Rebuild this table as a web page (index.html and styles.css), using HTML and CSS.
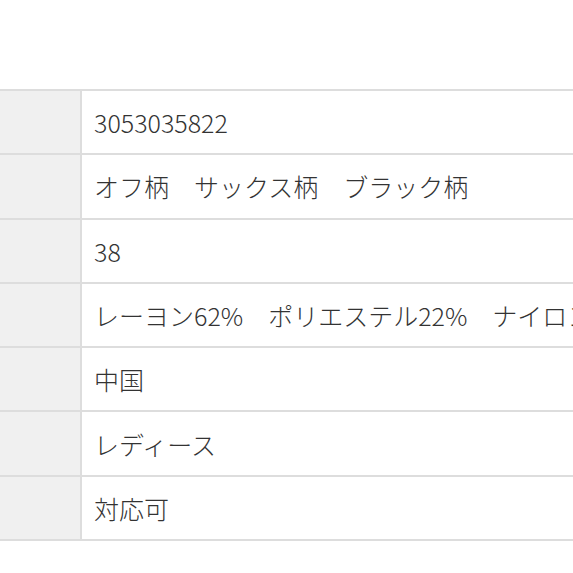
FILE: index.html
```html
<!DOCTYPE html>
<html lang="ja">
<head>
<meta charset="utf-8">
<link rel="stylesheet" href="styles.css">
</head>
<body>
<div class="spec">
  <div class="row"><div class="label"></div><div class="value">3053035822</div></div>
  <div class="row"><div class="label"></div><div class="value">オフ柄　サックス柄　ブラック柄</div></div>
  <div class="row"><div class="label"></div><div class="value">38</div></div>
  <div class="row"><div class="label"></div><div class="value">レーヨン62%　ポリエステル22%　ナイロン16%</div></div>
  <div class="row"><div class="label"></div><div class="value">中国</div></div>
  <div class="row"><div class="label"></div><div class="value">レディース</div></div>
  <div class="row"><div class="label"></div><div class="value">対応可</div></div>
</div>
</body>
</html>
```
FILE: styles.css
```css
html, body {
  margin: 0;
  padding: 0;
  background: #fff;
  overflow: hidden;
}
.spec {
  margin-top: 89px;
  border-top: 2px solid #dddddd;
  font-family: "Noto Sans CJK JP", "Noto Sans", sans-serif;
  font-size: 25px;
  font-weight: 300;
  color: #333;
}
.row {
  display: grid;
  grid-template-columns: 82px 1fr;
  height: 62.3px;
  border-bottom: 2px solid #dddddd;
}
.label {
  background: #f0f0f0;
  border-right: 2px solid #dddddd;
}
.value {
  display: flex;
  align-items: center;
  padding-left: 12px;
  white-space: nowrap;
  overflow: hidden;
}
```
